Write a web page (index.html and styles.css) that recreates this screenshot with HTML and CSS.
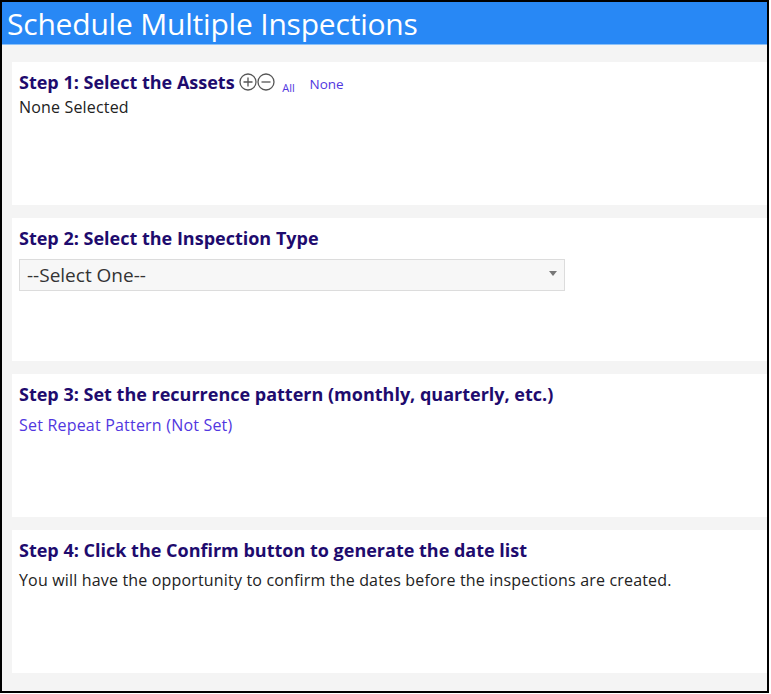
FILE: index.html
```html
<!DOCTYPE html>
<html>
<head>
  <title>Schedule Multiple Inspections</title>
  <link rel="stylesheet" href="styles.css">
</head>
<body>
  <div class="frame">
    <div class="titlebar">
      <h1>Schedule Multiple Inspections</h1>
    </div>

    <div class="steps">
      <div class="step">
        <h2>Step 1: Select the Assets
          <span class="tools">
            <svg class="circ" width="18" height="18" viewBox="0 0 18 18">
              <circle cx="9" cy="9" r="8" fill="none" stroke="#555" stroke-width="1.3"/>
              <path d="M4.5 9h9M9 4.5v9" stroke="#555" stroke-width="1.3"/>
            </svg><svg class="circ" width="18" height="18" viewBox="0 0 18 18">
              <circle cx="9" cy="9" r="8" fill="none" stroke="#555" stroke-width="1.3"/>
              <path d="M4.5 9h9" stroke="#555" stroke-width="1.3"/>
            </svg><a href="#" class="small-link">All</a>
            <a href="#" class="small-link none">None</a>
          </span>
        </h2>
        <div class="text first">None Selected</div>
      </div>

      <div class="step">
        <h2>Step 2: Select the Inspection Type</h2>
        <div class="select">
          <span>--Select One--</span>
          <span class="arrow"></span>
        </div>
      </div>

      <div class="step">
        <h2>Step 3: Set the recurrence pattern (monthly, quarterly, etc.)</h2>
        <a href="#" class="link">Set Repeat Pattern (Not Set)</a>
      </div>

      <div class="step">
        <h2>Step 4: Click the Confirm button to generate the date list</h2>
        <div class="text small">You will have the opportunity to confirm the dates before the inspections are created.</div>
      </div>
    </div>
  </div>
</body>
</html>
```

FILE: styles.css
```css
body {
  margin: 0;
  font-family: "Open Sans", "Noto Sans", Arial, sans-serif;
  background-color: #fff;
}

.frame {
  width: 765px;
  height: 689px;
  border: 2px solid #000;
  background-color: #f4f4f4;
  overflow: hidden;
}

.titlebar {
  background-color: #2888f5;
  height: 42px;
  border-bottom: 1px solid #8cc1f8;
}

.titlebar h1 {
  margin: 0;
  padding-left: 5px;
  color: #fff;
  font-weight: normal;
  font-size: 30px;
  line-height: 44px;
  letter-spacing: -0.2px;
}

.steps {
  padding: 17px 0 0 10px;
  display: flex;
  flex-direction: column;
  gap: 13px;
}

.step {
  background-color: #fff;
  height: 143px;
  box-sizing: border-box;
  padding: 9px 7px;
}

.step h2 {
  margin: 0;
  height: 22px;
  color: #1e0b6e;
  font-size: 18px;
  font-weight: bold;
  line-height: 22px;
  white-space: nowrap;
}

.tools {
  font-weight: normal;
}

.circ {
  vertical-align: -2px;
}

.small-link {
  color: #5137e0;
  font-size: 11px;
  text-decoration: none;
  vertical-align: -3px;
  margin-left: 7px;
}

.small-link.none {
  font-size: 13.5px;
  margin-left: 10px;
  vertical-align: 0;
}

.text {
  color: #222;
  font-size: 16px;
  line-height: 22px;
  letter-spacing: 0.17px;
}

.text.first {
  margin-top: 3px;
}

.text.small {
  margin-top: 8px;
}

.link {
  display: inline-block;
  margin-top: 9px;
  color: #5137e0;
  font-size: 16px;
  letter-spacing: 0.2px;
  text-decoration: none;
}

.select {
  margin-top: 10px;
  width: 546px;
  height: 32px;
  box-sizing: border-box;
  border: 1px solid #dcdcdc;
  background-color: #f7f7f7;
  display: flex;
  align-items: center;
  justify-content: space-between;
  padding: 0 7px 0 7px;
  color: #333;
  font-size: 19px;
}

.arrow {
  width: 0;
  height: 0;
  border-left: 4px solid transparent;
  border-right: 4px solid transparent;
  border-top: 5px solid #777;
  margin-bottom: 4px;
}
```
